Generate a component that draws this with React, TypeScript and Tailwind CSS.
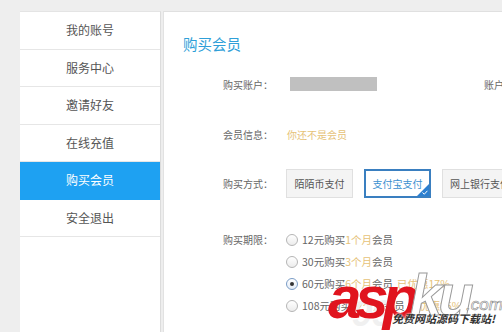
import React from "react";

const menu = ["我的账号", "服务中心", "邀请好友", "在线充值", "购买会员", "安全退出"];

const plans = [
  { price: "12元购买", term: "1个月", extra: "" },
  { price: "30元购买", term: "3个月", extra: "" },
  { price: "60元购买", term: "6个月", extra: "已优惠17%" },
  { price: "108元购买", term: "12个月", extra: "已优惠25%" },
];

const font = { fontFamily: '"Microsoft YaHei", "Noto Sans CJK SC", sans-serif' };
const latin = { fontFamily: '"Liberation Sans", Arial, sans-serif' };

export default function App() {
  return (
    <div
      className="relative flex w-[502px] h-[332px] overflow-hidden bg-[#eeeeee] pt-[11px] pl-[20px]"
      style={font}
    >
      {/* left menu */}
      <div className="w-[141px] shrink-0 bg-white border-r border-[#dcdcdc] border-t border-t-[#e4e4e4]">
        {menu.map((m) => (
          <div
            key={m}
            className={
              m === "购买会员"
                ? "h-[37.5px] flex items-center justify-center text-[12px] text-white bg-[#1ea1f2] border-b border-[#1ea1f2]"
                : "h-[37.5px] flex items-center justify-center text-[12px] text-[#555] border-b border-[#e6e6e6]"
            }
          >
            {m}
          </div>
        ))}
      </div>

      {/* main panel */}
      <div className="ml-[2px] flex-1 min-w-0 bg-white border-l border-[#e2e2e2] border-t border-t-[#e0e0e0] pl-[19px] pt-[22px] relative overflow-hidden">
        <div className="text-[14.5px] text-[#2f9fd8] leading-[20px]">购买会员</div>

        <div className="relative flex items-center h-[14px] mt-[23px] pl-[40px]">
          <span className="w-[67px] text-[10px] text-[#666]">购买账户：</span>
          <div className="w-[87px] h-[14px] bg-[#c0c0c0]" />
          <span className="absolute left-[301px] text-[10px] text-[#666] whitespace-nowrap">账户：</span>
        </div>

        <div className="flex items-center h-[14px] mt-[36px] pl-[40px]">
          <span className="w-[64px] text-[10px] text-[#666]">会员信息：</span>
          <span className="text-[10px] text-[#e6c277]">你还不是会员</span>
        </div>

        <div className="flex items-center mt-[28px] pl-[40px] whitespace-nowrap">
          <span className="w-[63px] shrink-0 text-[10px] text-[#666]">购买方式：</span>
          <div className="flex gap-[11px]">
            <div className="w-[67px] h-[29px] shrink-0 flex items-center justify-center bg-[#f4f4f4] border border-[#e0e0e0] text-[10px] text-[#555]">
              陌陌币支付
            </div>
            <div className="relative w-[67px] h-[29px] shrink-0 flex items-center justify-center bg-white border-2 border-[#3a7fc0] text-[10px] text-[#3a8fd0] overflow-hidden">
              支付宝支付
              <svg className="absolute right-0 bottom-0" width="12" height="12" viewBox="0 0 12 12">
                <path d="M12 0 L12 12 L0 12 Z" fill="#2b7fd0" />
                <path d="M5.5 8.5 L7.3 10.2 L10.4 6.8" stroke="#fff" strokeWidth="1" fill="none" />
              </svg>
            </div>
            <div className="w-[80px] h-[29px] shrink-0 flex items-center justify-start pl-[7px] bg-[#f4f4f4] border border-[#e0e0e0] text-[10px] text-[#555]">
              网上银行支付
            </div>
          </div>
        </div>

        <div className="flex mt-[31px] pl-[40px]">
          <span className="w-[63px] shrink-0 text-[10px] text-[#666] leading-[22px]">购买期限：</span>
          <div className="flex flex-col">
            {plans.map((p, i) => (
              <div key={p.price} className="flex items-center h-[22px] whitespace-nowrap text-[10.5px]">
                <span
                  className={
                    i === 2
                      ? "w-[12px] h-[12px] rounded-full border border-[#7a9cc6] bg-gradient-to-b from-white to-[#e4ecf6] flex items-center justify-center mr-[4px]"
                      : "w-[12px] h-[12px] rounded-full border border-[#b5b5b5] bg-gradient-to-b from-white to-[#ececec] mr-[4px]"
                  }
                >
                  {i === 2 && <span className="w-[4px] h-[4px] rounded-full bg-[#333]" />}
                </span>
                <span className="text-[#666]">{p.price}</span>
                <span className="text-[#e6c277]">{p.term}</span>
                <span className="text-[#666]">会员</span>
                {p.extra && <span className="ml-[4px] text-[#e6c277]">{p.extra}</span>}
              </div>
            ))}
          </div>
        </div>
      </div>

      {/* watermark */}
      <div className="absolute left-[352px] top-[296px] text-[36px] font-bold italic text-[#f0f0f0] leading-none" style={latin}>
        99
      </div>
      <div
        className="absolute left-[328px] top-[268px] text-[60px] font-bold italic text-[#e0141e] leading-none tracking-[-6px]"
        style={latin}
      >
        asp
      </div>
      <div
        className="absolute left-[410px] top-[266px] text-[58px] font-bold italic text-white leading-none tracking-[-4px]"
        style={{ ...latin, WebkitTextStroke: "1px #9a9a9a" }}
      >
        ku
      </div>
      <div
        className="absolute left-[466px] top-[296px] text-[17px] italic text-white leading-none"
        style={{ ...latin, WebkitTextStroke: "0.6px #8a8a8a" }}
      >
        .com
      </div>
      <div
        className="absolute left-[392px] top-[313px] text-[11px] italic font-bold text-[#333] leading-none whitespace-nowrap"
        style={{ textShadow: "0 0 2px #fff, 0 0 2px #fff" }}
      >
        免费网站源码下载站!
      </div>
    </div>
  );
}
